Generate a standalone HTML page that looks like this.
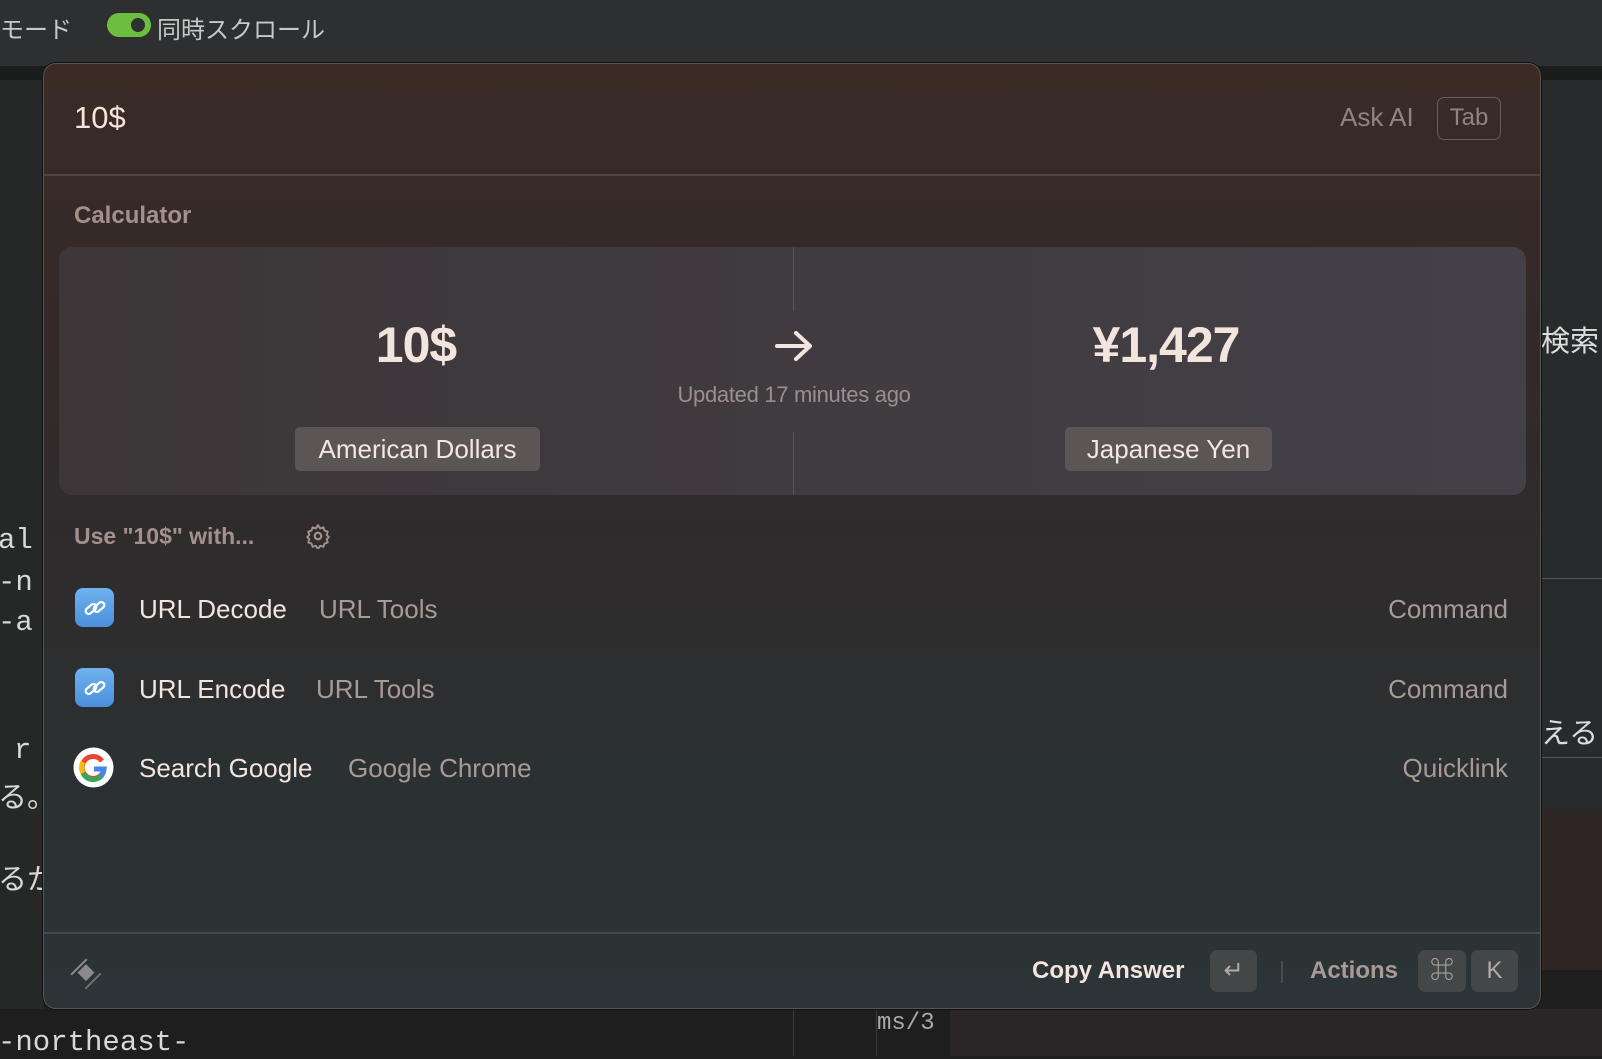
<!DOCTYPE html>
<html><head><meta charset="utf-8"><style>
*{margin:0;padding:0;box-sizing:border-box}
body{width:1602px;height:1056px;overflow:hidden;background:#1f1f1f;font-family:"Liberation Sans","Noto Sans CJK JP",sans-serif;position:relative}
.a{position:absolute;white-space:nowrap}
.mono{font-family:"Liberation Mono","Noto Sans CJK JP",monospace;color:#d8d8d8;font-size:29px}
#modal{position:absolute;left:43px;top:63px;width:1498px;height:946px;border-radius:13px;border:1px solid #5a5552;
background:linear-gradient(180deg,#3a2b25 0%,#33292a 30%,#2e2c2d 55%,#2a3133 80%,#2b3436 100%);overflow:hidden;box-shadow:0 0 0 1px #111}
.t{color:#f3e4de}
.g{color:#a99a95}
.pill{position:absolute;background:#5b5556;border-radius:5px;color:#f2e6e2;font-size:26px;text-align:center;line-height:44px;height:44px}
.key{position:absolute;background:#434748;border-radius:7px;color:#b5aaa6;font-size:24px;text-align:center;line-height:42px;height:42px}
.ic{position:absolute;left:31px;width:39px;height:39px;border-radius:8px;background:linear-gradient(#6fb2ee,#4a8fdc)}
</style></head><body>
<div class="a" style="left:0;top:0;width:1602px;height:66px;background:#2d2f30"></div>
<div class="a" style="left:0;top:66px;width:1602px;height:14px;background:#1b1c1c"></div>
<div class="a" style="left:0;top:80px;width:44px;height:976px;background:#262828"></div>
<div class="a" style="left:1541px;top:80px;width:61px;height:730px;background:#282b2c"></div>
<div class="a" style="left:1541px;top:810px;width:61px;height:160px;background:#2f2626"></div>
<div class="a" style="left:0;top:1009px;width:1602px;height:47px;background:#1e1e1e"></div>
<div class="a" style="left:793px;top:1009px;width:1px;height:47px;background:#3a3a3a"></div>
<div class="a" style="left:876px;top:1009px;width:1px;height:47px;background:#3a3a3a"></div>
<div class="a" style="left:950px;top:1009px;width:652px;height:47px;background:#2a2627"></div>
<div class="a" style="left:0;top:10px;color:#c8c8c8;font-size:24px">モード</div>
<div class="a" style="left:107px;top:13px;width:44px;height:24px;border-radius:12px;background:#6dbd3f"></div>
<div class="a" style="left:131px;top:18px;width:14px;height:14px;border-radius:7px;background:#2d2f30"></div>
<div class="a" style="left:157px;top:10px;color:#c8c8c8;font-size:24px">同時スクロール</div>
<div class="a mono" style="left:-2px;top:524px">al</div>
<div class="a mono" style="left:-2px;top:566px">-n</div>
<div class="a mono" style="left:-2px;top:606px">-a</div>
<div class="a mono" style="left:14px;top:734px">r</div>
<div class="a mono" style="left:-2px;top:774px">る。</div>
<div class="a mono" style="left:-2px;top:856px">るか</div>
<div class="a mono" style="left:-2px;top:1026px">-northeast-</div>
<div class="a mono" style="left:877px;top:1010px;font-size:24px;color:#aaa">ms/3</div>
<div class="a" style="left:1541px;top:318px;color:#ddd;font-size:29px">検索</div>
<div class="a" style="left:1541px;top:710px;color:#ddd;font-size:29px">える</div>
<div class="a" style="left:1541px;top:578px;width:61px;height:1px;background:#555"></div>
<div class="a" style="left:1541px;top:757px;width:61px;height:1px;background:#555"></div>

<div id="modal">
  <div class="a t" style="left:30px;top:36px;font-size:31px">10$</div>
  <div class="a g" style="left:1296px;top:38px;font-size:26px;color:#8f8480">Ask AI</div>
  <div class="a" style="left:1393px;top:33px;width:64px;height:43px;border:1.5px solid #6a5d57;border-radius:7px;color:#8f8480;font-size:24px;text-align:center;line-height:40px">Tab</div>
  <div class="a" style="left:0;top:110px;width:1498px;height:1.5px;background:#4f4440"></div>
  <div class="a g" style="left:30px;top:138px;font-size:24px;font-weight:bold;color:#a2918b">Calculator</div>
  <div class="a" style="left:15px;top:183px;width:1467px;height:248px;border-radius:13px;background:linear-gradient(90deg,#3c3638,#413c41 60%,#434048)"></div>
  <div class="a" style="left:749px;top:183px;width:1px;height:64px;background:#5a5456"></div>
  <div class="a" style="left:749px;top:368px;width:1px;height:63px;background:#5a5456"></div>
  <div class="a t" style="left:322px;top:252px;width:100px;text-align:center;font-size:50px;font-weight:bold;letter-spacing:-1px">10$</div>
  <div class="a t" style="left:1047px;top:252px;width:150px;text-align:center;font-size:50px;font-weight:bold;letter-spacing:-1px">¥1,427</div>
  <svg class="a" style="left:730px;top:265px" width="40" height="34" viewBox="0 0 40 34"><path d="M3 17H36M22 4L36 17L22 30" stroke="#f3e4de" stroke-width="4" fill="none" stroke-linecap="round" stroke-linejoin="round"/></svg>
  <div class="a g" style="left:620px;top:318px;width:260px;text-align:center;font-size:22px;color:#9a8f8d;letter-spacing:-0.3px">Updated 17 minutes ago</div>
  <div class="pill" style="left:251px;top:363px;width:245px">American Dollars</div>
  <div class="pill" style="left:1021px;top:363px;width:207px">Japanese Yen</div>

  <div class="a g" style="left:30px;top:459px;font-size:23px;font-weight:bold;color:#a2918b">Use "10$" with...</div>
  <svg class="a" style="left:261px;top:459px" width="26" height="26" viewBox="0 0 24 24"><circle cx="12" cy="12" r="3" stroke="#a2918b" stroke-width="2" fill="none"/><path d="M12 2l2 3 3-1 1 3 3 1-1 3 2 2-2 2 1 3-3 1-1 3-3-1-2 3-2-3-3 1-1-3-3-1 1-3-2-2 2-2-1-3 3-1 1-3 3 1z" stroke="#a2918b" stroke-width="1.8" fill="none" stroke-linejoin="round"/></svg>

  <div class="ic" style="top:524px"></div>
  <svg class="a" style="left:38px;top:531px" width="26" height="26" viewBox="0 0 26 26"><g stroke="#fff" stroke-width="2.2" fill="none"><rect x="3" y="11" width="12" height="6" rx="3" transform="rotate(-40 9 14)"/><rect x="11" y="9" width="12" height="6" rx="3" transform="rotate(-40 17 12)"/></g></svg>
  <div class="a t" style="left:95px;top:530px;font-size:26px">URL Decode</div>
  <div class="a g" style="left:275px;top:530px;font-size:26px">URL Tools</div>
  <div class="a g" style="right:32px;top:530px;font-size:26px">Command</div>

  <div class="ic" style="top:604px"></div>
  <svg class="a" style="left:38px;top:611px" width="26" height="26" viewBox="0 0 26 26"><g stroke="#fff" stroke-width="2.2" fill="none"><rect x="3" y="11" width="12" height="6" rx="3" transform="rotate(-40 9 14)"/><rect x="11" y="9" width="12" height="6" rx="3" transform="rotate(-40 17 12)"/></g></svg>
  <div class="a t" style="left:95px;top:610px;font-size:26px">URL Encode</div>
  <div class="a g" style="left:272px;top:610px;font-size:26px">URL Tools</div>
  <div class="a g" style="right:32px;top:610px;font-size:26px">Command</div>

  <svg class="a" style="left:29px;top:683px" width="41" height="41" viewBox="0 0 41 41"><circle cx="20.5" cy="20.5" r="20" fill="#fff"/>
  <path d="M29 14A11 11 0 1 0 31 22H21" stroke="#ea4335" stroke-width="5" fill="none"/>
  <path d="M10 15A11 11 0 0 0 10 26" stroke="#fbbc05" stroke-width="5" fill="none"/>
  <path d="M10 26A11 11 0 0 0 29 28" stroke="#34a853" stroke-width="5" fill="none"/>
  <path d="M21 22H31A11 11 0 0 1 28 29" stroke="#4285f4" stroke-width="5" fill="none"/></svg>
  <div class="a t" style="left:95px;top:689px;font-size:26px">Search Google</div>
  <div class="a g" style="left:304px;top:689px;font-size:26px">Google Chrome</div>
  <div class="a g" style="right:32px;top:689px;font-size:26px">Quicklink</div>

  <div class="a" style="left:0;top:868px;width:1498px;height:1.5px;background:#434b4d"></div>
  <svg class="a" style="left:22px;top:890px" width="40" height="40" viewBox="0 0 40 40"><g transform="rotate(45 20 20)" fill="#8a8a8a"><rect x="13" y="13" width="12" height="12"/><rect x="9" y="9" width="2" height="22"/><rect x="29" y="9" width="2" height="22" opacity=".7"/></g></svg>
  <div class="a t" style="left:988px;top:893px;font-size:24px;font-weight:bold">Copy Answer</div>
  <div class="key" style="left:1166px;top:886px;width:47px">↵</div>
  <div class="a" style="left:1237px;top:897px;width:2px;height:22px;background:#454c4e"></div>
  <div class="a g" style="left:1266px;top:893px;font-size:24px;font-weight:bold;color:#a99a95">Actions</div>
  <div class="key" style="left:1374px;top:886px;width:48px">⌘</div>
  <div class="key" style="left:1427px;top:886px;width:47px">K</div>
</div>
</body></html>
